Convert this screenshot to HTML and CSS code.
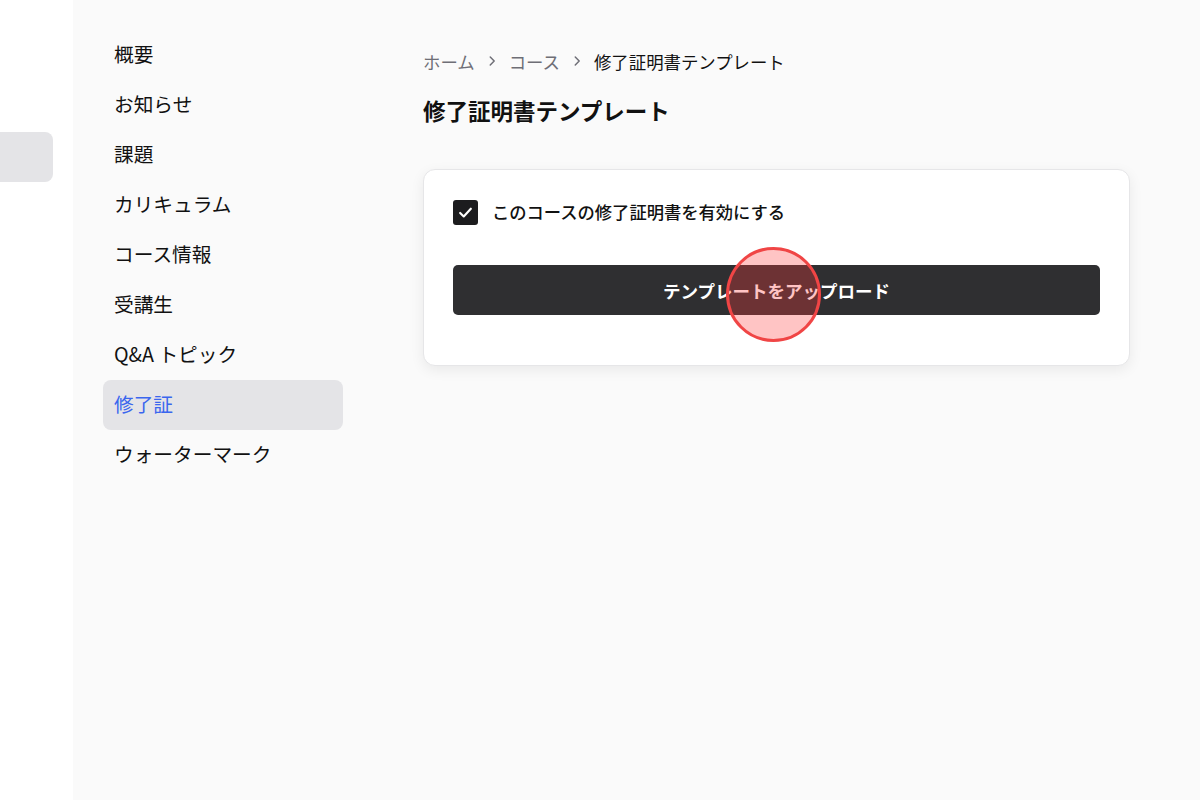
FILE: index.html
```html
<!DOCTYPE html>
<html lang="ja">
<head>
  <meta charset="UTF-8" />
  <meta name="viewport" content="width=device-width, initial-scale=1.0" />
  <title>修了証明書テンプレート</title>
  <link rel="stylesheet" href="styles.css">
</head>
<body>
  <aside class="rail">
    <div class="rail-item"></div>
  </aside>

  <nav class="sidebar">
    <a href="#">概要</a>
    <a href="#">お知らせ</a>
    <a href="#">課題</a>
    <a href="#">カリキュラム</a>
    <a href="#">コース情報</a>
    <a href="#">受講生</a>
    <a href="#">Q&amp;A トピック</a>
    <a href="#" class="active">修了証</a>
    <a href="#">ウォーターマーク</a>
  </nav>

  <main>
    <div class="breadcrumb">
      <a href="#">ホーム</a>
      <svg class="chev" viewBox="0 0 16 16" width="14" height="14"><path d="M6 3.5 10.5 8 6 12.5" fill="none" stroke="currentColor" stroke-width="1.7" stroke-linecap="round" stroke-linejoin="round"/></svg>
      <a href="#">コース</a>
      <svg class="chev" viewBox="0 0 16 16" width="14" height="14"><path d="M6 3.5 10.5 8 6 12.5" fill="none" stroke="currentColor" stroke-width="1.7" stroke-linecap="round" stroke-linejoin="round"/></svg>
      <span class="current">修了証明書テンプレート</span>
    </div>

    <h1>修了証明書テンプレート</h1>

    <section class="card">
      <label class="check-row">
        <span class="checkbox">
          <svg viewBox="0 0 16 16" width="19" height="19"><path d="M3.5 8.4 6.5 11.3 12.5 4.8" fill="none" stroke="#fff" stroke-width="1.8" stroke-linecap="round" stroke-linejoin="round"/></svg>
        </span>
        このコースの修了証明書を有効にする
      </label>
      <div class="upload-wrap">
        <button class="upload">テンプレートをアップロード</button>
        <span class="click-mark"></span>
      </div>
    </section>
  </main>
</body>
</html>
```

FILE: styles.css
```css
* {
  box-sizing: border-box;
}
body {
  margin: 0;
  min-height: 800px;
  display: flex;
  background: #fafafa;
  font-family: "Noto Sans CJK JP", Inter, sans-serif;
  color: #111;
}
.rail {
  width: 73px;
  flex-shrink: 0;
  background: #fff;
  padding-top: 132px;
}
.rail-item {
  width: 53px;
  height: 50px;
  background: #e4e4e7;
  border-radius: 0 8px 8px 0;
}
.sidebar {
  width: 300px;
  flex-shrink: 0;
  padding: 30px 30px 0 30px;
  display: flex;
  flex-direction: column;
}
.sidebar a {
  display: flex;
  align-items: center;
  height: 50px;
  padding: 0 11px 3px 11px;
  border-radius: 8px;
  font-size: 19.7px;
  color: #111;
  text-decoration: none;
}
.sidebar a.active {
  background: #e4e4e7;
  color: #3a66ee;
}
main {
  flex: 1;
  padding: 49px 70px 0 50px;
}
.breadcrumb {
  display: flex;
  align-items: center;
  height: 24px;
  font-size: 17.4px;
}
.breadcrumb a {
  color: #6e6e76;
  text-decoration: none;
}
.breadcrumb .chev {
  color: #6e6e76;
  margin: 0 10px;
}
.breadcrumb .current {
  color: #111;
}
h1 {
  margin: 22px 0 0 0;
  font-size: 22.5px;
  line-height: 30px;
  font-weight: 700;
}
.card {
  margin-top: 44px;
  background: #fff;
  border: 1px solid #e6e6e8;
  border-radius: 12px;
  box-shadow: 0 4px 14px rgba(0, 0, 0, 0.07);
  padding: 29px 29px 50px 29px;
}
.check-row {
  display: flex;
  align-items: center;
  gap: 14px;
  font-size: 17.3px;
  font-weight: 500;
  height: 26px;
  line-height: 22px;
}
.checkbox {
  width: 25px;
  height: 25px;
  border-radius: 3px;
  background: #1c1c1e;
  display: flex;
  align-items: center;
  justify-content: center;
}
.upload-wrap {
  position: relative;
  margin-top: 40px;
}
.upload {
  display: block;
  width: 100%;
  height: 50px;
  border: none;
  border-radius: 5px;
  background: #2f2f31;
  color: #fff;
  font-family: inherit;
  font-size: 17.5px;
  font-weight: 700;
}
.click-mark {
  position: absolute;
  left: 273px;
  top: -18px;
  width: 95px;
  height: 95px;
  border-radius: 50%;
  border: 3px solid #f04545;
  background: rgba(255, 60, 60, 0.3);
  pointer-events: none;
}
```
